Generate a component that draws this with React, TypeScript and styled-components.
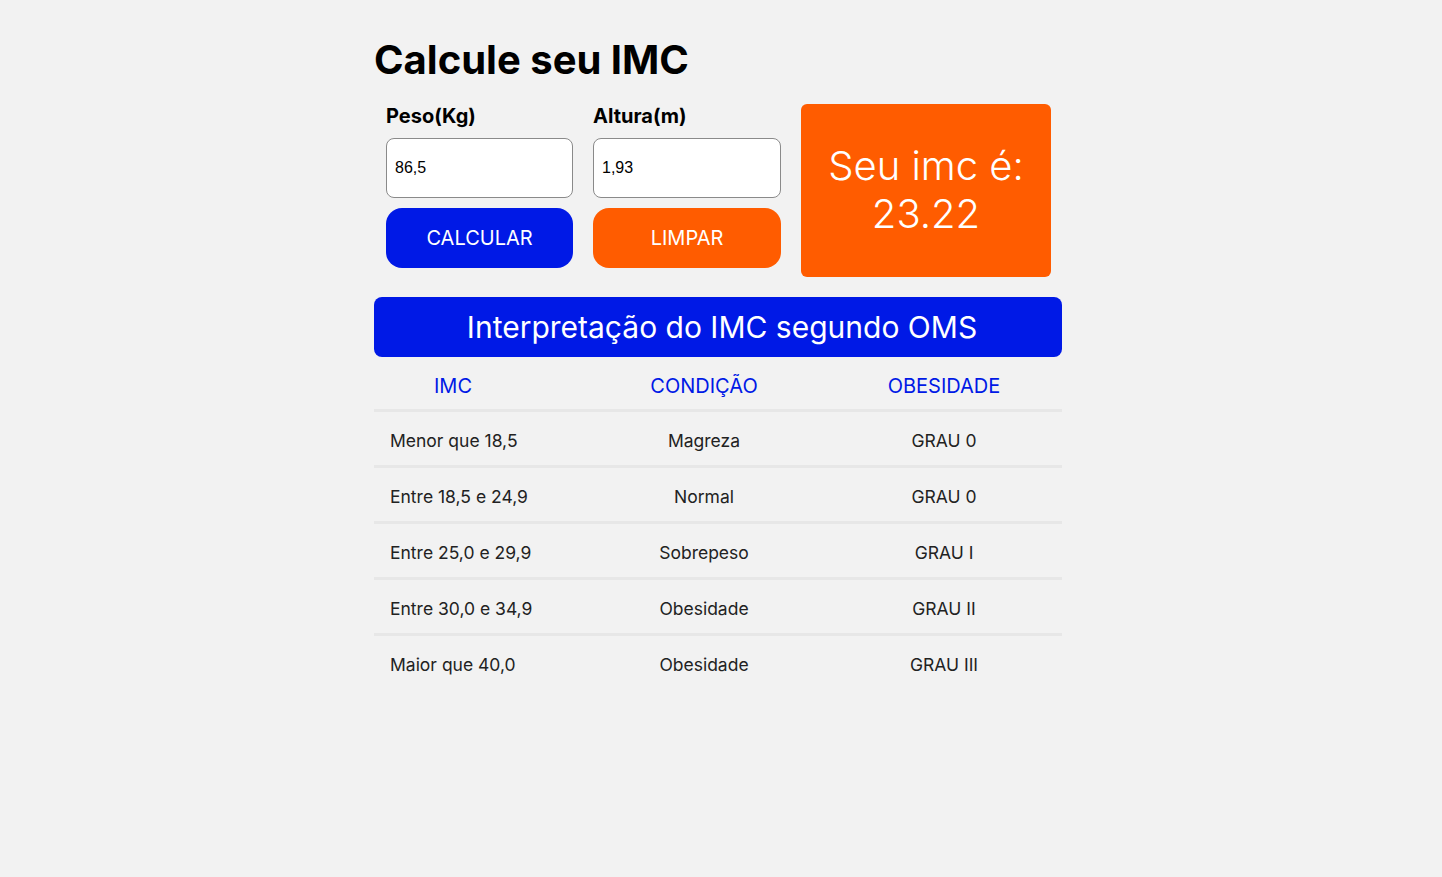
import React, { useState } from 'react'
import styled, { createGlobalStyle } from 'styled-components'

const GlobalStyle = createGlobalStyle`
  body {
    margin: 0;
    background: #f2f2f2;
    font-family: Inter, "Liberation Sans", sans-serif;
  }
`

const Page = styled.div`
  min-height: 877px;
  display: flex;
  justify-content: center;
`

const Container = styled.div`
  width: 688px;
  margin-right: 6px;
  padding-top: 36px;
  display: flex;
  flex-direction: column;
`

const Title = styled.h1`
  margin: 0;
  font-size: 40px;
  font-weight: 700;
  color: #000;
  line-height: 48px;
`

const Top = styled.div`
  display: flex;
  gap: 20px;
  margin-top: 20px;
  padding-left: 12px;
`

const Form = styled.div`
  display: grid;
  grid-template-columns: 187px 188px;
  column-gap: 20px;
`

const Field = styled.div`
  display: flex;
  flex-direction: column;
`

const Label = styled.label`
  font-size: 20px;
  font-weight: 700;
  line-height: 24px;
  height: 24px;
  margin-bottom: 10px;
  color: #000;
`

const Input = styled.input`
  box-sizing: border-box;
  height: 60px;
  width: 100%;
  border: 1px solid #8a8a8a;
  border-radius: 8px;
  background: #fff;
  padding: 0 8px;
  font-family: "Liberation Sans", Arial, sans-serif;
  font-size: 16px;
  color: #000;
  outline: none;
`

const Button = styled.button<{ $color: string }>`
  height: 60px;
  margin-top: 10px;
  border: none;
  border-radius: 16px;
  background: ${(p) => p.$color};
  color: #fff;
  font-family: Inter, "Liberation Sans", sans-serif;
  font-size: 20px;
  cursor: pointer;
`

const Result = styled.div`
  box-sizing: border-box;
  width: 250px;
  height: 173px;
  border-radius: 6px;
  background: #ff5c00;
  color: #fff;
  font-size: 40px;
  font-weight: 300;
  line-height: 48px;
  text-align: center;
  display: flex;
  align-items: center;
  justify-content: center;
  padding-bottom: 2px;
`

const Banner = styled.div`
  margin-top: 20px;
  height: 60px;
  border-radius: 8px;
  background: #0019e6;
  color: #fff;
  font-size: 30px;
  font-weight: 400;
  display: flex;
  align-items: center;
  justify-content: center;
  padding-left: 8px;
`

const Table = styled.div`
  display: flex;
  flex-direction: column;
`

const Row = styled.div<{ $head?: boolean }>`
  display: grid;
  grid-template-columns: 216px 228px 1fr;
  align-items: center;
  height: ${(p) => (p.$head ? '52px' : '53px')};
  border-bottom: 3px solid #e7e7e7;
  color: ${(p) => (p.$head ? '#0019e6' : '#222')};
  font-size: ${(p) => (p.$head ? '20px' : '17.5px')};

  &:last-child {
    border-bottom: none;
  }
`

const Cell = styled.div<{ $first?: boolean; $last?: boolean; $head?: boolean }>`
  text-align: ${(p) => (p.$first ? 'left' : 'center')};
  padding-left: ${(p) => (p.$first ? (p.$head ? '60px' : '16px') : p.$last ? '8px' : '0')};
  padding-top: ${(p) => (p.$head ? '5px' : '3px')};
`

const rows = [
  ['Menor que 18,5', 'Magreza', 'GRAU 0'],
  ['Entre 18,5 e 24,9', 'Normal', 'GRAU 0'],
  ['Entre 25,0 e 29,9', 'Sobrepeso', 'GRAU I'],
  ['Entre 30,0 e 34,9', 'Obesidade', 'GRAU II'],
  ['Maior que 40,0', 'Obesidade', 'GRAU III'],
]

export default function App() {
  const [peso, setPeso] = useState('86,5')
  const [altura, setAltura] = useState('1,93')
  const [imc, setImc] = useState('23.22')

  const calcular = () => {
    const p = parseFloat(peso.replace(',', '.'))
    const a = parseFloat(altura.replace(',', '.'))
    if (p > 0 && a > 0) setImc((p / (a * a)).toFixed(2))
  }

  const limpar = () => {
    setPeso('')
    setAltura('')
    setImc('')
  }

  return (
    <Page>
      <GlobalStyle />
      <Container>
        <Title>Calcule seu IMC</Title>
        <Top>
          <Form>
            <Field>
              <Label>Peso(Kg)</Label>
              <Input value={peso} onChange={(e) => setPeso(e.target.value)} />
              <Button $color="#0019e6" onClick={calcular}>CALCULAR</Button>
            </Field>
            <Field>
              <Label>Altura(m)</Label>
              <Input value={altura} onChange={(e) => setAltura(e.target.value)} />
              <Button $color="#ff5c00" onClick={limpar}>LIMPAR</Button>
            </Field>
          </Form>
          <Result>
            Seu imc é:
            <br />
            {imc}
          </Result>
        </Top>
        <Banner>Interpretação do IMC segundo OMS</Banner>
        <Table>
          <Row $head>
            <Cell $first $head>IMC</Cell>
            <Cell $head>CONDIÇÃO</Cell>
            <Cell $last $head>OBESIDADE</Cell>
          </Row>
          {rows.map((r, i) => (
            <Row key={i}>
              <Cell $first>{r[0]}</Cell>
              <Cell>{r[1]}</Cell>
              <Cell $last>{r[2]}</Cell>
            </Row>
          ))}
        </Table>
      </Container>
    </Page>
  )
}
